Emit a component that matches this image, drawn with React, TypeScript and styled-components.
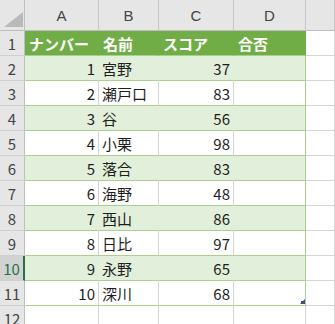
import React from 'react'
import styled, { createGlobalStyle, css } from 'styled-components'

const GlobalStyle = createGlobalStyle`
  html, body {
    margin: 0;
    padding: 0;
    background: #ffffff;
  }
  body {
    font-family: 'Noto Sans CJK JP', 'Noto Sans', sans-serif;
  }
`

const GREEN = '#70ad47'
const BAND = '#e2efda'
const TABLE_LINE = '#a9d08e'
const GRID = '#d4d4d4'

type Kind = 'head' | 'band' | 'plain' | 'out'

const Sheet = styled.div`
  display: grid;
  grid-template-columns: 25px 74px 60px 75px 72px 1fr;
  grid-auto-rows: 25px;
  grid-template-rows: 31px;
  width: 100vw;
  height: 100vh;
  overflow: hidden;
`

const Corner = styled.div`
  position: relative;
  background: #e6e6e6;
  border-right: 1px solid #bfbfbf;
  border-bottom: 1px solid #bfbfbf;
  box-sizing: border-box;
`

const CornerMark = styled.svg`
  position: absolute;
  left: 4px;
  top: 12px;
`

const ColHead = styled.div`
  display: flex;
  align-items: center;
  justify-content: center;
  background: #e6e6e6;
  border-right: 1px solid #c6c6c6;
  border-bottom: 1px solid #bfbfbf;
  box-sizing: border-box;
  color: #444444;
  font-family: 'Liberation Sans', 'Noto Sans', sans-serif;
  font-size: 15px;
  padding-top: 1px;
`

const RowHead = styled.div<{ $active?: boolean }>`
  display: flex;
  align-items: center;
  justify-content: center;
  background: #e6e6e6;
  border-right: 1px solid #bfbfbf;
  border-bottom: 1px solid #d0d0d0;
  box-sizing: border-box;
  color: #444444;
  font-family: 'Noto Sans CJK JP', sans-serif;
  font-size: 15px;
  ${({ $active }) =>
    $active &&
    css`
      background: #d2d2d2;
      color: #217346;
      border-right: 2px solid #217346;
    `}
`

const Cell = styled.div<{ $kind: Kind; $right?: boolean; $edge?: boolean }>`
  position: relative;
  display: flex;
  align-items: center;
  justify-content: ${({ $right }) => ($right ? 'flex-end' : 'flex-start')};
  padding: ${({ $right }) => ($right ? '0 3px 0 0' : '0 0 0 3px')};
  box-sizing: border-box;
  font-size: 15px;
  color: #1e1e1e;
  white-space: nowrap;
  overflow: visible;
  border-bottom: 1px solid ${({ $kind }) => ($kind === 'out' ? GRID : TABLE_LINE)};
  ${({ $kind, $edge }) => {
    if ($kind === 'head')
      return css`
        background: ${GREEN};
        color: #ffffff;
        font-weight: 700;
        padding-left: 4px;
        border-right: 1px solid ${$edge ? GREEN : GREEN};
      `
    if ($kind === 'band')
      return css`
        background: ${BAND};
        border-right: 1px solid ${$edge ? TABLE_LINE : BAND};
      `
    if ($kind === 'plain')
      return css`
        background: #ffffff;
        border-right: 1px solid ${$edge ? TABLE_LINE : GRID};
      `
    return css`
      background: #ffffff;
      border-right: 1px solid ${GRID};
    `
  }}
`

const Handle = styled.svg`
  position: absolute;
  right: 0;
  bottom: 1px;
`

const columns = ['A', 'B', 'C', 'D']
const headers = ['ナンバー', '名前', 'スコア', '合否']

const rows = [
  { no: 1, name: '宮野', score: 37 },
  { no: 2, name: '瀬戸口', score: 83 },
  { no: 3, name: '谷', score: 56 },
  { no: 4, name: '小栗', score: 98 },
  { no: 5, name: '落合', score: 83 },
  { no: 6, name: '海野', score: 48 },
  { no: 7, name: '西山', score: 86 },
  { no: 8, name: '日比', score: 97 },
  { no: 9, name: '永野', score: 65 },
  { no: 10, name: '深川', score: 68 },
]

export default function App() {
  const activeRow = 10

  return (
    <>
      <GlobalStyle />
      <Sheet>
        <Corner>
          <CornerMark width="19" height="15" viewBox="0 0 19 15">
            <polygon points="0,15 19,0 19,15" fill="#b9b9b9" />
          </CornerMark>
        </Corner>
        {columns.map(c => (
          <ColHead key={c}>{c}</ColHead>
        ))}
        <ColHead />

        <RowHead>1</RowHead>
        {headers.map((h, i) => (
          <Cell key={h} $kind="head" $edge={i === 3}>
            {h}
          </Cell>
        ))}
        <Cell $kind="out" />

        {rows.map((r, i) => {
          const rowNo = i + 2
          const kind: Kind = i % 2 === 0 ? 'band' : 'plain'
          const last = i === rows.length - 1
          return (
            <React.Fragment key={r.no}>
              <RowHead $active={rowNo === activeRow}>{rowNo}</RowHead>
              <Cell $kind={kind} $right>
                {r.no}
              </Cell>
              <Cell $kind={kind}>{r.name}</Cell>
              <Cell $kind={kind} $right>
                {r.score}
              </Cell>
              <Cell $kind={kind} $edge>
                {last && (
                  <Handle width="5" height="5" viewBox="0 0 5 5">
                    <polygon points="0,5 5,0 5,5" fill="#3f4a8a" />
                    <rect x="1" y="2" width="4" height="3" fill="#3f4a8a" />
                  </Handle>
                )}
              </Cell>
              <Cell $kind="out" />
            </React.Fragment>
          )
        })}

        <RowHead>12</RowHead>
        {columns.map(c => (
          <Cell key={c} $kind="out" />
        ))}
        <Cell $kind="out" />
      </Sheet>
    </>
  )
}
